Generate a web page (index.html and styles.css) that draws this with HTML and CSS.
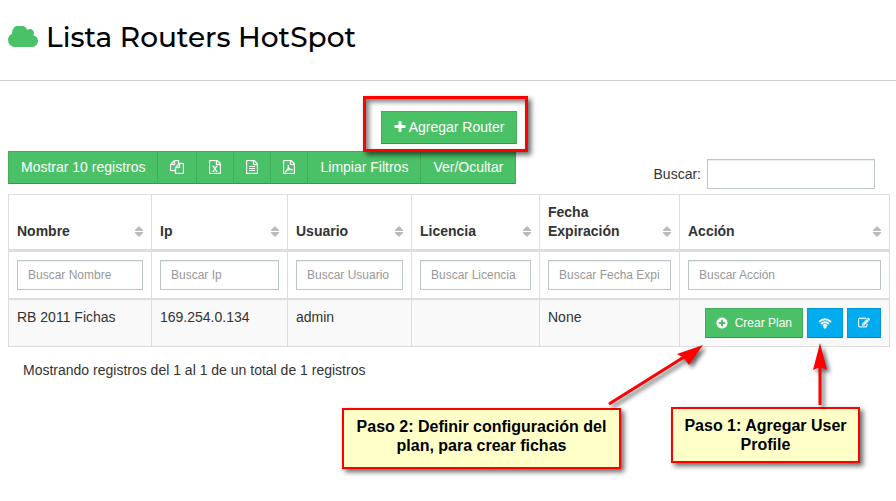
FILE: index.html
```
<!DOCTYPE html>
<html lang="es">
<head>
  <meta charset="UTF-8">
  <meta name="viewport" content="width=device-width, initial-scale=1.0">
  <title>Lista Routers HotSpot</title>
  <link rel="stylesheet" href="styles.css">
</head>
<body>
  <!-- Icons -->
  <svg class="sprite" aria-hidden="true">
    <symbol id="i-file" viewBox="0 0 1792 1792">
      <path d="M1596 380q28 28 48 76t20 88v1152q0 40-28 68t-68 28h-1344q-40 0-68-28t-28-68v-1600q0-40 28-68t68-28h896q40 0 88 20t76 48zm-444-244v376h376q-10-29-22-41l-313-313q-12-12-41-22zm384 1528v-1024h-416q-40 0-68-28t-28-68v-416h-768v1536h1280z"/>
    </symbol>
    <symbol id="i-sort" viewBox="0 0 8 11">
      <path d="M4 0l4 4v1H0V4zM4 11l4-4V6H0v1z"/>
    </symbol>
  </svg>

  <header class="page-header">
    <h1>
      <svg class="cloud" viewBox="64 256 1920 1280"><path d="M1984 1152q0 159-112.500 271.500t-271.500 112.500h-1088q-185 0-316.500-131.500t-131.500-316.500q0-132 71-241.500t187-163.500q-2-28-2-43 0-212 150-362t362-150q158 0 286.500 88t187.500 230q70-62 166-62 106 0 181 75t75 181q0 75-41 138 129 30 213 134.500t84 239.500z"/></svg>
      Lista Routers HotSpot
    </h1>
  </header>

  <main class="content">
    <div class="actions">
      <div class="highlight">
        <button type="button" class="btn btn-success">
          <svg class="icon" viewBox="128 128 1536 1536"><path d="M1600 736v192q0 40-28 68t-68 28h-416v416q0 40-28 68t-68 28h-192q-40 0-68-28t-28-68v-416h-416q-40 0-68-28t-28-68v-192q0-40 28-68t68-28h416v-416q0-40 28-68t68-28h192q40 0 68 28t28 68v416h416q40 0 68 28t28 68z"/></svg>
          Agregar Router
        </button>
      </div>
    </div>

    <div class="toolbar">
      <div class="btn-group">
        <button type="button" class="btn btn-success">Mostrar 10 registros</button>
        <button type="button" class="btn btn-success" aria-label="Copiar">
          <svg class="icon" viewBox="0 0 1792 1792"><path d="M1696 384q40 0 68 28t28 68v1216q0 40-28 68t-68 28h-960q-40 0-68-28t-28-68v-288h-544q-40 0-68-28t-28-68v-672q0-40 20-88t48-76l408-408q28-28 76-48t88-20h416q40 0 68 28t28 68v328q68-40 128-40h416zm-544 213l-299 299h299v-299zm-640-384l-299 299h299v-299zm196 647l316-316v-416h-384v416q0 40-28 68t-68 28h-416v640h512v-256q0-40 20-88t48-76zm956 804v-1152h-384v416q0 40-28 68t-68 28h-416v640h896z"/></svg>
        </button>
        <button type="button" class="btn btn-success" aria-label="Excel">
          <svg class="icon icon-file" viewBox="128 0 1536 1792"><use href="#i-file" width="1792" height="1792"/><path class="line" d="M660 810L1120 1460M1120 810L660 1460M560 800h260M980 800h240M560 1470h240M980 1470h240"/></svg>
        </button>
        <button type="button" class="btn btn-success" aria-label="CSV">
          <svg class="icon icon-file" viewBox="128 0 1536 1792"><use href="#i-file" width="1792" height="1792"/><path class="line" d="M512 832h768M512 1088h768M512 1344h768"/></svg>
        </button>
        <button type="button" class="btn btn-success" aria-label="PDF">
          <svg class="icon icon-file" viewBox="128 0 1536 1792"><use href="#i-file" width="1792" height="1792"/><path class="line" d="M480 1500Q800 1180 830 740Q830 600 780 740Q800 1180 1320 1290Q1380 1200 1100 1200Q760 1240 480 1420z"/></svg>
        </button>
        <button type="button" class="btn btn-success">Limpiar Filtros</button>
        <button type="button" class="btn btn-success">Ver/Ocultar</button>
      </div>
      <div class="search">
        <label for="search">Buscar:</label>
        <input type="search" id="search" class="form-control">
      </div>
    </div>

    <table class="table">
      <colgroup>
        <col class="col-name">
        <col class="col-ip">
        <col class="col-user">
        <col class="col-licence">
        <col class="col-date">
        <col>
      </colgroup>
      <thead>
        <tr>
          <th><div class="sortable">Nombre <svg class="sort"><use href="#i-sort"/></svg></div></th>
          <th><div class="sortable">Ip <svg class="sort"><use href="#i-sort"/></svg></div></th>
          <th><div class="sortable">Usuario <svg class="sort"><use href="#i-sort"/></svg></div></th>
          <th><div class="sortable">Licencia <svg class="sort"><use href="#i-sort"/></svg></div></th>
          <th><div class="sortable">Fecha Expiración <svg class="sort"><use href="#i-sort"/></svg></div></th>
          <th><div class="sortable">Acción <svg class="sort"><use href="#i-sort"/></svg></div></th>
        </tr>
        <tr class="filters">
          <td><input type="text" class="form-control" placeholder="Buscar Nombre" aria-label="Buscar Nombre"></td>
          <td><input type="text" class="form-control" placeholder="Buscar Ip" aria-label="Buscar Ip"></td>
          <td><input type="text" class="form-control" placeholder="Buscar Usuario" aria-label="Buscar Usuario"></td>
          <td><input type="text" class="form-control" placeholder="Buscar Licencia" aria-label="Buscar Licencia"></td>
          <td><input type="text" class="form-control" placeholder="Buscar Fecha Expiración" aria-label="Buscar Fecha Expiración"></td>
          <td><input type="text" class="form-control" placeholder="Buscar Acción" aria-label="Buscar Acción"></td>
        </tr>
      </thead>
      <tbody>
        <tr>
          <td>RB 2011 Fichas</td>
          <td>169.254.0.134</td>
          <td>admin</td>
          <td></td>
          <td>None</td>
          <td>
            <div class="row-actions">
              <button type="button" class="btn btn-sm btn-success btn-plan">
                <svg class="icon" viewBox="64 64 1664 1664"><path d="M1344 960v-128q0-26-19-45t-45-19h-256v-256q0-26-19-45t-45-19h-128q-26 0-45 19t-19 45v256h-256q-26 0-45 19t-19 45v128q0 26 19 45t45 19h256v256q0 26 19 45t45 19h128q26 0 45-19t19-45v-256h256q26 0 45-19t19-45zm320-64q0 209-103 385.500t-279.500 279.500-385.500 103-385.500-103-279.500-279.500-103-385.500 103-385.500 279.500-279.500 385.500-103 385.500 103 279.500 279.500 103 385.500z"/></svg>
                Crear Plan
              </button>
              <button type="button" class="btn btn-sm btn-info" aria-label="User Profile">
                <svg class="icon icon-wifi" viewBox="0 0 28 22"><path class="arc" d="M2 8Q14-3 26 8M6 12Q14 5 22 12M10 16Q14 12 18 16"/><path d="M14 15l4 3-4 4-4-4z"/></svg>
              </button>
              <button type="button" class="btn btn-sm btn-info" aria-label="Editar">
                <svg class="icon icon-edit" viewBox="0 64 1792 1664"><path d="M888 1184l116-116-152-152-116 116v56h96v96h56zm440-720q-16-16-33 1l-350 350q-17 17-1 33t33-1l350-350q17-17 1-33zm80 594v190q0 119-84.500 203.500t-203.500 84.500h-832q-119 0-203.500-84.500t-84.500-203.500v-832q0-119 84.500-203.500t203.500-84.500h832q63 0 117 25 15 7 18 23 3 17-9 29l-49 49q-14 14-32 8-23-6-45-6h-832q-66 0-113 47t-47 113v832q0 66 47 113t113 47h832q66 0 113-47t47-113v-126q0-13 9-22l64-64q15-15 35-7t20 29zm-96-738l288 288-672 672h-288v-288zm444 132l-92 92-288-288 92-92q28-28 68-28t68 28l152 152q28 28 28 68t-28 68z"/></svg>
              </button>
            </div>
          </td>
        </tr>
      </tbody>
    </table>

    <p class="info">Mostrando registros del 1 al 1 de un total de 1 registros</p>
  </main>

  <!-- Step notes over the table -->
  <div class="note note-plan">Paso 2: Definir configuración del plan, para crear fichas</div>
  <div class="note note-profile">Paso 1: Agregar User Profile</div>
  <svg class="arrows" viewBox="0 0 240 80" aria-hidden="true">
    <path class="shaft" d="M9 63L84 16M220 64V26"/>
    <path d="M103 4L89 24 84 17 77 13zM220 2L227 29 220 26 213 29z"/>
  </svg>
</body>
</html>
```
FILE: styles.css
```
* {
  box-sizing: border-box;
}

body {
  position: relative;
  min-height: 100vh;
  margin: 0;
  background: #fff;
  color: #333;
  font-family: "Liberation Sans", Arial, sans-serif;
  font-size: 14px;
  line-height: 19px;
}

button,
input {
  font-family: inherit;
}

.sprite {
  display: none;
}

.page-header {
  padding: 19px 8px 25px;
  border-bottom: 1px solid #c9cfcf;
}

.page-header h1 {
  display: flex;
  align-items: center;
  gap: 8px;
  margin: 0;
  color: #000;
  font-family: Montserrat, "DejaVu Sans", sans-serif;
  font-size: 28px;
  font-weight: 500;
  line-height: 36px;
}

.cloud {
  width: 30px;
  height: 22px;
  fill: #4bc167;
}

.content {
  padding: 30px 6px 0 8px;
}

.actions {
  display: flex;
  justify-content: center;
  margin-bottom: 7px;
}

.highlight {
  position: relative;
}

.highlight::after {
  content: "";
  position: absolute;
  inset: -15px -11px -8px -18px;
  border: 3px solid #f00;
  box-shadow: 3px 3px 5px rgba(0, 0, 0, 0.6), inset 3px 3px 5px rgba(0, 0, 0, 0.5);
  pointer-events: none;
}

/* Buttons */
.btn {
  display: inline-flex;
  align-items: center;
  justify-content: center;
  gap: 3px;
  height: 33px;
  padding: 0 12px 2px;
  border: 1px solid;
  color: #fff;
  font-size: 14px;
  white-space: nowrap;
  cursor: pointer;
}

.btn-success {
  background: #4bc167;
  border-color: #43ad5d #43ad5d #3a964f;
}

.btn-info {
  background: #00abee;
  border-color: #0099d6 #0099d6 #0085ba;
}

.btn-sm {
  height: 30px;
  padding: 0 10px;
  font-size: 12px;
}

.btn-plan {
  gap: 7px;
}

.icon {
  width: 12px;
  height: 12px;
  fill: #fff;
}

.btn-group {
  display: flex;
}

.btn-group .btn + .btn {
  margin-left: -1px;
}

.btn-group .icon {
  width: 14px;
  height: 14px;
  stroke: #fff;
  stroke-width: 40;
}

.btn-group .icon-file {
  width: 12px;
}

.btn-group .line {
  fill: none;
  stroke-width: 140;
}

.icon-wifi {
  width: 14px;
  height: 11px;
}

.icon-edit {
  stroke: #fff;
  stroke-width: 40;
}

.arc {
  fill: none;
  stroke: #fff;
  stroke-width: 4;
}

.toolbar {
  display: flex;
  justify-content: space-between;
  align-items: flex-start;
  margin-bottom: 5px;
}

.search {
  display: flex;
  align-items: center;
  gap: 6px;
  padding: 8px 15px 0 0;
}

.search .form-control {
  width: 168px;
}

.form-control {
  width: 100%;
  height: 30px;
  padding: 0 10px;
  border: 1px solid #bdc6c6;
  border-radius: 0;
  background: #fff;
  box-shadow: inset 0 1px 1px rgba(0, 0, 0, 0.07);
  color: #333;
  font-size: 12px;
}

.form-control::placeholder {
  color: #999;
}

/* Table */
.table {
  width: 100%;
  border-collapse: collapse;
  table-layout: fixed;
}

.col-name {
  width: 143px;
}

.col-ip {
  width: 136px;
}

.col-user {
  width: 124px;
}

.col-licence {
  width: 128px;
}

.col-date {
  width: 140px;
}

.table th,
.table td {
  padding: 8px;
  border: 1px solid #ddd;
  text-align: left;
  vertical-align: top;
}

.table th {
  border-bottom-width: 3px;
  vertical-align: bottom;
}

.table .filters td {
  border-bottom-width: 2px;
}

.table .form-control {
  display: block;
}

.table tbody td {
  background: #f9f9f9;
}

.sortable {
  display: flex;
  align-items: flex-end;
  justify-content: space-between;
}

.sort {
  flex: none;
  width: 8px;
  height: 11px;
  margin-bottom: 4px;
  fill: #bbb;
}

.row-actions {
  display: flex;
  justify-content: flex-end;
  gap: 4px;
}

.info {
  margin: 14px 15px;
}

/* Notes */
.note {
  position: absolute;
  padding: 7px 10px;
  border: 2px solid #f00;
  background: #ffffc8;
  box-shadow: 3px 3px 5px rgba(0, 0, 0, 0.6);
  color: #000;
  font-size: 16px;
  font-weight: bold;
  text-align: center;
}

.note-plan {
  top: 408px;
  left: 342px;
  width: 279px;
  padding-bottom: 12px;
}

.note-profile {
  top: 407px;
  left: 671px;
  width: 189px;
}

.arrows {
  position: absolute;
  top: 341px;
  left: 600px;
  width: 240px;
  height: 80px;
  fill: #f00;
  filter: drop-shadow(3px 3px 2px rgba(0, 0, 0, 0.6));
  pointer-events: none;
}

.shaft {
  fill: none;
  stroke: #f00;
  stroke-width: 3;
}
```
